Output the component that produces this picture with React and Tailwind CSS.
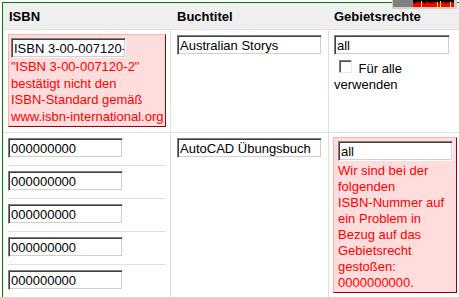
import React from 'react'

// ── Shared bits ───────────────────────────────────────────────
const FONT = "font-['Liberation_Sans',Arial,Helvetica,sans-serif]"

function Field({ value, width }) {
    return (
        <input
            readOnly
            value={value}
            className={`block h-[20px] ${width} border border-t-[#808080] border-l-[#808080] border-b-white border-r-white bg-white pl-[2px] pr-[1px] text-[13px] leading-[16px] text-black outline-none shadow-[inset_1px_1px_0_#404040,inset_-1px_-1px_0_#d4d0c8] ${FONT}`}
        />
    )
}

function ErrorBox({ className, children }) {
    return (
        <div className={`border border-t-[#ffb0b0] border-l-[#ffb0b0] border-b-[#990000] border-r-[#990000] bg-[#ffdddd] text-[#ff0000] ${className}`}>
            {children}
        </div>
    )
}

// little cpu meter sitting over the top right corner
function Meter() {
    return (
        <div className="absolute left-[392px] top-0 flex h-[9px] w-[65px] bg-[#d4d0c8] pb-[2px] pl-[1px] pr-[3px]">
            <div className="h-[7px] w-[20px] bg-[#808080]" />
            <svg width="41" height="7" viewBox="0 0 41 7" className="block bg-black">
                <path
                    d="M0 7 L0 3 L1 2 L2 4 L3 2 L4 3 L5 1 L6 3 L7 2 L8 4 L9 2 L10 3 L11 2 L12 4 L13 3 L14 1 L15 3 L16 2 L17 3 L18 2 L19 4 L20 2 L21 3 L22 1 L23 3 L24 2 L25 4 L26 2 L27 3 L28 2 L29 3 L30 1 L31 3 L32 2 L33 4 L34 2 L35 3 L36 2 L37 3 L38 1 L39 3 L40 2 L41 3 L41 7 Z"
                    fill="#ff0000"
                />
                <rect x="8" y="1" width="1" height="6" fill="#ffff00" />
                <rect x="24" y="2" width="1" height="5" fill="#ffff00" />
                <rect x="27" y="1" width="1" height="6" fill="#ffff00" />
                <rect x="37" y="2" width="1" height="5" fill="#ffff00" />
            </svg>
        </div>
    )
}

const ISBN_LIST = ['000000000', '000000000', '000000000', '000000000', '000000000']

export default function App() {
    return (
        <div className={`relative h-[297px] w-[459px] overflow-hidden bg-white text-[13px] text-black ${FONT}`}>
            <div className="pl-[2px] pt-[2px]">
                <div className="w-[520px] border-l border-t border-[#008000]">
                    {/* Header */}
                    <div className="flex h-[27px] border-b border-[#e0e0e0] bg-[#efefef] font-bold leading-[15px]">
                        <div className="w-[168px] shrink-0 pl-[6px] pt-[6px]">ISBN</div>
                        <div className="w-[158px] shrink-0 pl-[6px] pt-[6px]">Buchtitel</div>
                        <div className="flex-1 pl-[5px] pt-[6px]">Gebietsrechte</div>
                    </div>

                    {/* Row 1 */}
                    <div className="flex h-[103px] border-b border-[#e0e0e0]">
                        <div className="w-[168px] shrink-0 border-r border-[#e0e0e0] pl-[5px] pr-[4px] pt-[4px]">
                            <ErrorBox className="pl-[2px] pt-[3px] pb-[1px]">
                                <Field value="ISBN 3-00-007120-2" width="w-[115px]" />
                                <p className="mt-[1px] whitespace-nowrap leading-[16.5px]">
                                    "ISBN 3-00-007120-2"<br />
                                    bestätigt nicht den<br />
                                    ISBN-Standard gemäß<br />
                                    www.isbn-international.org
                                </p>
                            </ErrorBox>
                        </div>
                        <div className="w-[158px] shrink-0 border-r border-[#e0e0e0] pl-[6px] pt-[5px]">
                            <Field value="Australian Storys" width="w-[145px]" />
                        </div>
                        <div className="flex-1 pl-[5px] pt-[5px]">
                            <Field value="all" width="w-[116px]" />
                            <p className="mt-[5px] w-[116px] leading-[16px]">
                                <span className="ml-[5px] mr-[3px] inline-block h-[13px] w-[13px] border border-t-[#808080] border-l-[#808080] border-b-[#e8e8e8] border-r-[#e8e8e8] bg-white shadow-[inset_1px_1px_0_#505050]" /> Für alle verwenden
                            </p>
                        </div>
                    </div>

                    {/* Row 2 */}
                    <div className="flex">
                        <div className="w-[168px] shrink-0 border-r border-[#e0e0e0] pl-[5px] pr-[4px]">
                            {ISBN_LIST.map((nr, i) => (
                                <div key={i} className="border-b border-[#e0e0e0] pb-[7px] pt-[5px]">
                                    <Field value={nr} width="w-[115px]" />
                                </div>
                            ))}
                        </div>
                        <div className="w-[158px] shrink-0 border-r border-[#e0e0e0] pl-[6px] pt-[5px]">
                            <Field value="AutoCAD Übungsbuch" width="w-[145px]" />
                        </div>
                        <div className="flex-1 pl-[4px] pt-[4px]">
                            <ErrorBox className="w-[124px] pb-[1px] pl-[4px] pr-[2px] pt-[3px]">
                                <Field value="all" width="w-[115px]" />
                                <p className="mt-[2px] whitespace-nowrap leading-[16px]">
                                    Wir sind bei der<br />
                                    folgenden<br />
                                    ISBN-Nummer auf<br />
                                    ein Problem in<br />
                                    Bezug auf das<br />
                                    Gebietsrecht<br />
                                    gestoßen:<br />
                                    0000000000.
                                </p>
                            </ErrorBox>
                        </div>
                    </div>
                </div>
            </div>
            <Meter />
        </div>
    )
}
